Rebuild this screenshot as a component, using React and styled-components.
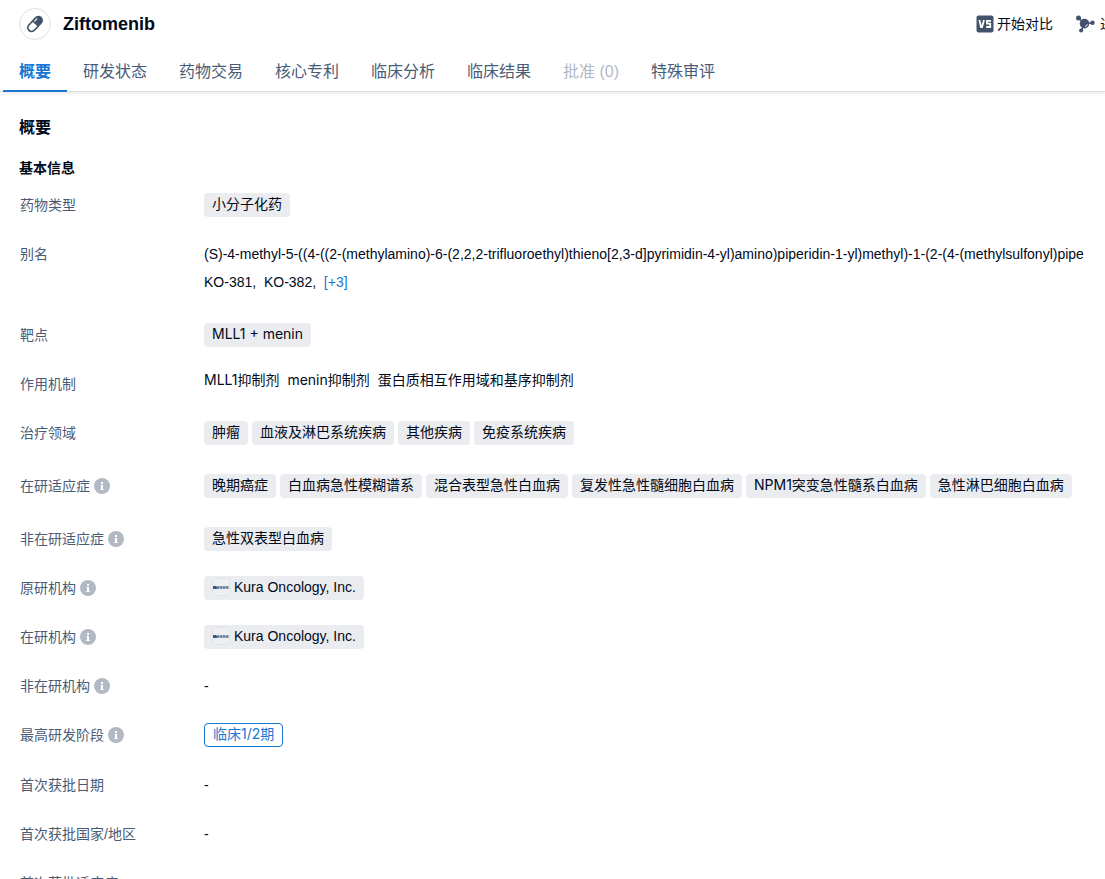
import React from 'react'
import styled, { createGlobalStyle } from 'styled-components'

const GlobalStyle = createGlobalStyle`
* {
  box-sizing: border-box;
}
body {
  margin: 0;
  background-color: #fff;
  color: #000a1a;
  font-family: "Liberation Sans", "Noto Sans CJK SC", sans-serif;
  font-size: 14px;
}
`

const Header = styled.header`
border-bottom: 1px solid #dcdde0;
box-shadow: 0 2px 4px rgba(0,0,0,0.08);
`

const TitleScroller = styled.div`
overflow: hidden;
`

const TitleBar = styled.div`
display: flex;
align-items: center;
min-width: 1172px;
height: 48px;
padding: 0 16px 0 19px;
`

const DrugIcon = styled.span`
display: flex;
align-items: center;
justify-content: center;
width: 32px;
height: 32px;
margin-right: 12px;
border: 1px solid #dfe1e6;
border-radius: 50%;
`

const Title = styled.h1`
margin: 0;
font-size: 18px;
line-height: 24px;
`

const Actions = styled.div`
display: flex;
gap: 22px;
margin-left: auto;
`

const Action = styled.button`
display: flex;
align-items: center;
gap: ${({ $gap }) => $gap}px;
padding: 0;
border: none;
background: none;
color: #000a1a;
font: inherit;
line-height: 20px;
white-space: nowrap;
cursor: pointer;
`

const Tabs = styled.nav`
display: flex;
height: 43px;
padding-left: 3px;
`

const Tab = styled.a`
height: 44px;
padding: 0 16px;
border-bottom: 2px solid ${({ $active }) => ($active ? '#1976d2' : 'transparent')};
color: ${({ $active, $disabled }) => ($active ? '#1976d2' : $disabled ? '#b3b9c4' : '#4a5b76')};
font-size: 16px;
font-weight: ${({ $active }) => ($active ? 700 : 400)};
line-height: 48px;
text-decoration: none;
white-space: nowrap;
`

const Content = styled.main`
padding: 24px 0 0 19px;
`

const SectionTitle = styled.h2`
margin: 0;
font-size: 16px;
line-height: 24px;
`

const SubTitle = styled.h3`
margin: 17px 0 0;
font-size: 14px;
line-height: 22px;
`

const InfoList = styled.dl`
margin: 2px 0 0;
`

const Row = styled.div`
display: grid;
grid-template-columns: 184px minmax(0, 1fr);
min-height: 49px;
padding: 10px 0 ${({ $extra }) => 11 + ($extra || 0)}px 1px;
`

const Label = styled.dt`
display: flex;
align-items: center;
gap: 4px;
height: 26px;
color: #4a5b76;
`

const Hint = styled.svg`
width: 16px;
height: 16px;
margin-top: 2px;
`

const Value = styled.dd`
margin: 0;
line-height: 28px;
`

const Mechanism = styled.p`
margin: 0;
font-family: Inter, "Noto Sans CJK SC", sans-serif;
line-height: 20px;
white-space: pre-wrap;
`

const AliasLine = styled.div`
overflow: hidden;
white-space: pre;
`

const More = styled.a`
color: #1976d2;
text-decoration: none;
`

const TagList = styled.div`
display: flex;
flex-wrap: wrap;
gap: 4px;
padding: 2px 0;
`

const Tag = styled.a`
display: flex;
align-items: center;
gap: 4px;
height: 24px;
padding: 0 8px 2px;
border: ${({ $outlined }) => ($outlined ? '1px solid #1976d2' : 'none')};
border-radius: 4px;
background-color: ${({ $outlined }) => ($outlined ? '#fff' : '#ebecf0')};
color: ${({ $outlined }) => ($outlined ? '#1976d2' : '#000a1a')};
font-family: ${({ $org }) => ($org ? '"Liberation Sans"' : 'Inter')}, "Noto Sans CJK SC", sans-serif;
line-height: 22px;
text-decoration: none;
white-space: nowrap;
`

const PillIcon = () => (
  <svg width="18" height="18" viewBox="0 0 18 18" aria-hidden="true">
    <g transform="rotate(-47 9 9)">
      <rect x="-0.6" y="4.4" width="19.2" height="9.2" rx="4.6" fill="#42526b" />
      <path d="M9 6H4.2a3 3 0 0 0 0 6H9z" fill="#fff" />
      <path d="M11 6.8h3" stroke="#fff" strokeWidth="1.2" strokeLinecap="round" />
    </g>
  </svg>
)

const VersusIcon = () => (
  <svg width="18" height="18" viewBox="0 0 18 18" fill="none" aria-hidden="true">
    <rect x="0.5" y="0.5" width="17" height="17" rx="2" fill="#42526b" />
    <path d="M3.4 5l1.6 7h1l2-7M15 5.8h-4v2.8h3.2v3.4h-4" stroke="#fff" strokeWidth="1.8" />
  </svg>
)

const MoleculeIcon = () => (
  <svg width="20" height="18" viewBox="0 0 20 18" aria-hidden="true">
    <path d="M3.5 3l6 5.5L17.5 8M9 9L6.5 15.5" stroke="#42526b" strokeWidth="1.4" fill="none" />
    <circle cx="3.5" cy="3" r="2.5" fill="#42526b" />
    <circle cx="9.5" cy="8.6" r="4.8" fill="#42526b" />
    <circle cx="17.5" cy="7.8" r="2.2" fill="#42526b" />
    <circle cx="6.1" cy="15.6" r="2" fill="#42526b" />
    <path d="M10 11.6a3 3 0 0 0 2.4-2.4" stroke="#fff" strokeWidth="0.9" fill="none" />
  </svg>
)

const InfoIcon = () => (
  <Hint viewBox="0 0 16 16" aria-hidden="true">
    <circle cx="8" cy="8" r="8" fill="#b3b9c4" />
    <path d="M7 4h2v2H7zM6.5 7H9v4h.8v1H6.2v-1H7V8h-.5z" fill="#fff" />
  </Hint>
)

const OrgLogo = () => (
  <svg width="18" height="18" viewBox="0 0 18 18" aria-hidden="true">
    <rect x="0.5" y="0.5" width="17" height="17" rx="3" fill="#eeeff2" stroke="#e1e3e8" />
    <path d="M1 8h3l1 1v2H1z" fill="#315c84" />
    <path d="M5 9.5h12" stroke="#a9b7c6" strokeWidth="3" />
    <path d="M5 9.5h12" stroke="#5f7b97" strokeWidth="2" strokeDasharray="2 1" />
  </svg>
)

const tabs = [
  { name: '概要', active: true },
  { name: '研发状态' },
  { name: '药物交易' },
  { name: '核心专利' },
  { name: '临床分析' },
  { name: '临床结果' },
  { name: '批准 (0)', disabled: true },
  { name: '特殊审评' },
]

const areas = ['肿瘤', '血液及淋巴系统疾病', '其他疾病', '免疫系统疾病']

const indications = [
  '晚期癌症',
  '白血病急性模糊谱系',
  '混合表型急性白血病',
  '复发性急性髓细胞白血病',
  'NPM1突变急性髓系白血病',
  '急性淋巴细胞白血病',
]

const Info = ({ label, hint, extra, children }) => (
  <Row $extra={extra}>
    <Label>
      {label}
      {hint && <InfoIcon />}
    </Label>
    <Value>{children}</Value>
  </Row>
)

const Tags = ({ items, outlined }) => (
  <TagList>
    {items.map((item) => (
      <Tag key={item} href="#" $outlined={outlined}>{item}</Tag>
    ))}
  </TagList>
)

const Organization = ({ name }) => (
  <TagList>
    <Tag href="#" $org>
      <OrgLogo />
      {name}
    </Tag>
  </TagList>
)

const App = () => {
  return (
    <>
      <GlobalStyle />
      <Header>
        <TitleScroller>
          <TitleBar>
            <DrugIcon><PillIcon /></DrugIcon>
            <Title>Ziftomenib</Title>
            <Actions>
              <Action type="button" $gap={3}><VersusIcon />开始对比</Action>
              <Action type="button" $gap={5}><MoleculeIcon />进入图谱</Action>
            </Actions>
          </TitleBar>
        </TitleScroller>
        <Tabs>
          {tabs.map((tab) => (
            <Tab key={tab.name} href="#" $active={tab.active} $disabled={tab.disabled}>{tab.name}</Tab>
          ))}
        </Tabs>
      </Header>
      <Content>
        <SectionTitle>概要</SectionTitle>
        <SubTitle>基本信息</SubTitle>
        <InfoList>
          <Info label="药物类型"><Tags items={['小分子化药']} /></Info>
          <Info label="别名" extra={4}>
            <AliasLine>(S)-4-methyl-5-((4-((2-(methylamino)-6-(2,2,2-trifluoroethyl)thieno[2,3-d]pyrimidin-4-yl)amino)piperidin-1-yl)methyl)-1-(2-(4-(methylsulfonyl)pipe</AliasLine>
            <AliasLine>{'KO-381,  KO-382,  '}<More href="#">[+3]</More></AliasLine>
          </Info>
          <Info label="靶点"><Tags items={['MLL1 + menin']} /></Info>
          <Info label="作用机制"><Mechanism>{'MLL1抑制剂  menin抑制剂  蛋白质相互作用域和基序抑制剂'}</Mechanism></Info>
          <Info label="治疗领域" extra={4}><Tags items={areas} /></Info>
          <Info label="在研适应症" hint extra={4}><Tags items={indications} /></Info>
          <Info label="非在研适应症" hint><Tags items={['急性双表型白血病']} /></Info>
          <Info label="原研机构" hint><Organization name="Kura Oncology, Inc." /></Info>
          <Info label="在研机构" hint><Organization name="Kura Oncology, Inc." /></Info>
          <Info label="非在研机构" hint>-</Info>
          <Info label="最高研发阶段" hint extra={1}><Tags items={['临床1/2期']} outlined /></Info>
          <Info label="首次获批日期">-</Info>
          <Info label="首次获批国家/地区">-</Info>
          <Info label="首次获批适应症">-</Info>
        </InfoList>
      </Content>
    </>
  )
}

export default App
